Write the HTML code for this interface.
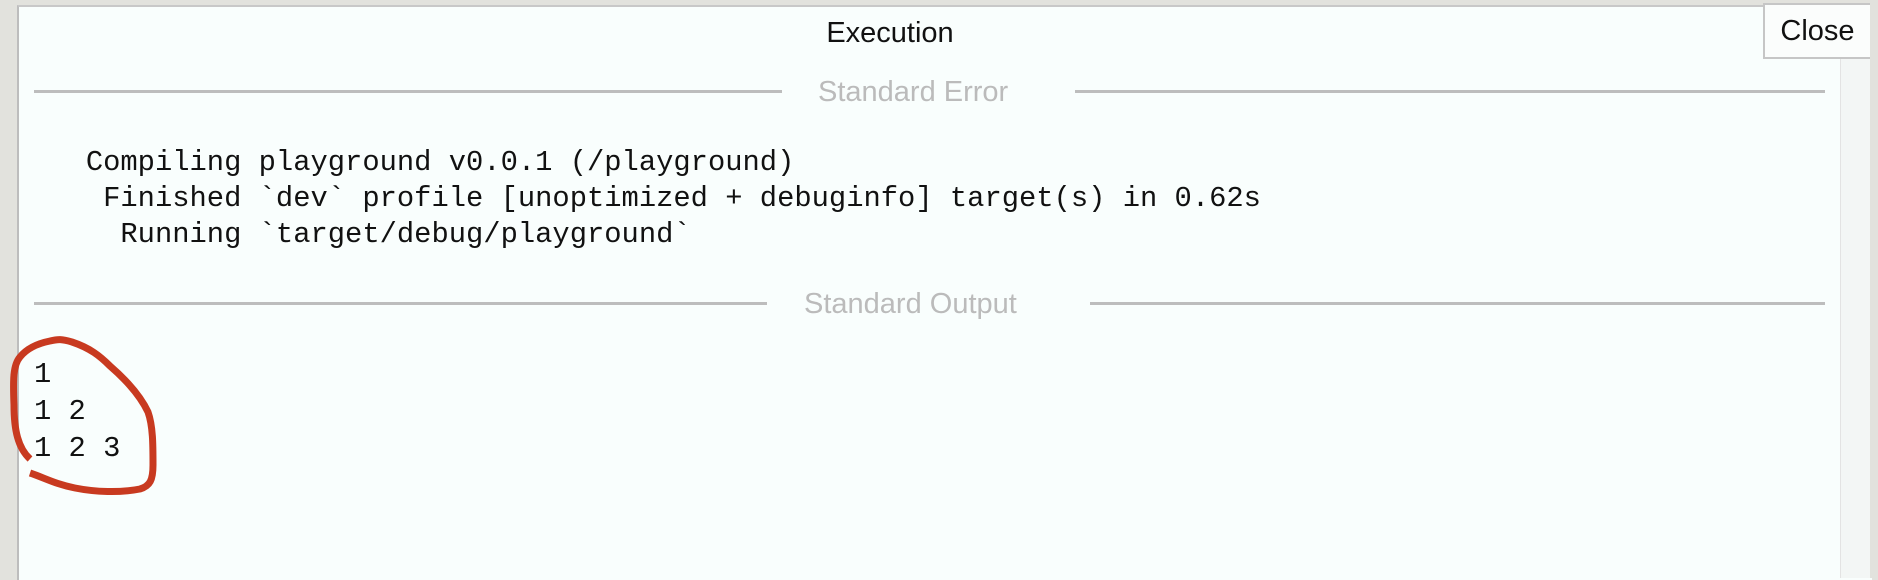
<!DOCTYPE html>
<html><head><meta charset="utf-8"><style>
html,body{margin:0;padding:0;width:1878px;height:578px;overflow:hidden;background:#e2e2dd;}
#p{position:absolute;left:17px;top:5px;width:1853px;height:573px;background:#f9fefd;border-left:2px solid #bdbdbd;border-top:2px solid #c8c8c8;}
.t{position:absolute;font-family:"Liberation Sans",sans-serif;}
.ln{position:absolute;height:3px;background:#bdbdbd;}
pre{position:absolute;margin:0;font-family:"Liberation Mono",monospace;font-size:28.8px;color:#111;}
</style></head><body>
<div id="p"></div>
<div class="t" style="left:0;width:1780px;text-align:center;top:17px;font-size:29px;color:#111;">Execution</div>
<div style="position:absolute;left:1840px;top:57px;width:30px;height:521px;background:#f3f6f5;border-left:1px solid #e3e3e3;"></div>
<div class="t" style="left:1763px;top:3px;width:105px;height:52px;background:#fbfdfc;border:2px solid #c6c6c6;box-sizing:content-box;font-size:29px;color:#111;text-align:center;line-height:52px;">Close</div>
<div style="position:absolute;left:1870px;top:0;width:8px;height:578px;background:#e2e2dd;"></div>
<div class="ln" style="left:34px;top:90px;width:748px;"></div>
<div class="ln" style="left:1075px;top:90px;width:750px;"></div>
<div class="t" style="left:818px;top:76px;font-size:29px;color:#bbbbbb;">Standard Error</div>
<pre style="left:34px;top:145px;line-height:36px;">   Compiling playground v0.0.1 (/playground)
    Finished `dev` profile [unoptimized + debuginfo] target(s) in 0.62s
     Running `target/debug/playground`</pre>
<div class="ln" style="left:34px;top:302px;width:733px;"></div>
<div class="ln" style="left:1090px;top:302px;width:735px;"></div>
<div class="t" style="left:804px;top:288px;font-size:29px;color:#bbbbbb;">Standard Output</div>
<pre style="left:34px;top:356px;line-height:37px;">1
1 2
1 2 3</pre>
<svg style="position:absolute;left:0;top:0" width="1878" height="578">
<path d="M30,459 C18,448 14,430 14,405 C13,380 13,365 20,357 C28,347 40,343 50,341 C58,339 62,339 72,342 C90,348 100,356 110,366 C125,379 140,395 148,412 C153,426 153,445 153,465 C153,480 150,486 140,489 C120,493 95,492 75,488 C55,484 45,478 30,473" fill="none" stroke="#c83a20" stroke-width="7" stroke-linecap="butt"/>
</svg>
</body></html>
